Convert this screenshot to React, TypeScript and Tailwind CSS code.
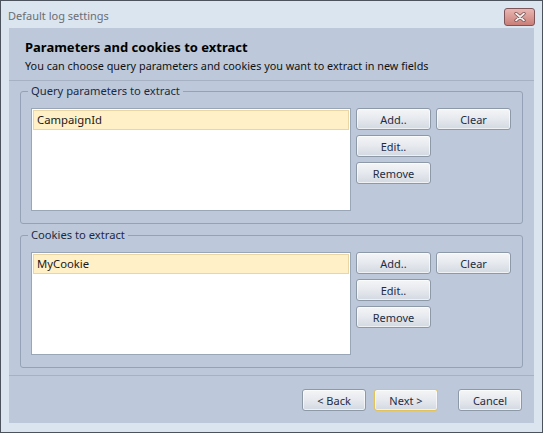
const font = "font-['Segoe_UI','Noto_Sans','Open_Sans',sans-serif]";

const Btn = ({ label, w = "w-[75px]", def = false }: { label: string; w?: string; def?: boolean }) => (
  <button
    className={`block ${w} h-[22px] rounded-[3px] border ${def ? "border-[#e3c25a]" : "border-[#8e99a8]"} bg-gradient-to-b from-[#f4f5f7] via-[#e6e9ee] to-[#d3d9e2] text-[11px] text-[#1e2d44] leading-none shadow-[inset_0_0_0_1px_rgba(255,255,255,0.6)]`}
  >
    {label}
  </button>
);

const Group = ({ title, item }: { title: string; item: string }) => (
  <div className="relative mx-[11px] rounded-[3px] border border-[#95a2b5] pt-[16px] pb-[12px] pl-[10px] pr-[11px]">
    <span className="absolute left-[7px] top-[-9px] bg-[#bdc9da] px-[3px] text-[11.2px] leading-[16px] text-[#1b2a44]">
      {title}
    </span>
    <div className="flex gap-[5px]">
      <div className="h-[103px] w-[322px] border border-[#98a6b8] bg-white p-[1px]">
        <div className="h-[20px] border border-[#e9d6a4] bg-[#fff0c8] pl-[3px] text-[11.3px] leading-[18px] text-[#1a1a1a]">
          {item}
        </div>
      </div>
      <div className="flex items-start gap-[5px]">
        <div className="flex flex-col gap-[5px]">
          <Btn label="Add.." />
          <Btn label="Edit.." />
          <Btn label="Remove" />
        </div>
        <Btn label="Clear" />
      </div>
    </div>
  </div>
);

export default function App() {
  return (
    <div className={`${font} flex h-[433px] w-[543px] flex-col border border-[#4d535c] bg-[#dae5f0]`}>
      <div className="flex h-[27px] shrink-0 items-center justify-between pl-[7px] pr-[7px]">
        <span className="mt-[4px] text-[11px] text-[#6b6e73]">Default log settings</span>
        <div className="mt-[4px] flex h-[18px] w-[31px] items-center justify-center rounded-[3px] border border-[#7d5558] bg-gradient-to-b from-[#e9b7b2] to-[#c97f78]">
          <svg width="12" height="10" viewBox="0 0 12 10">
            <path d="M2 1.5 L10 8.5 M10 1.5 L2 8.5" stroke="#6e4a4c" strokeWidth="3.2" strokeLinecap="round" />
            <path d="M2 1.5 L10 8.5 M10 1.5 L2 8.5" stroke="#f4eeee" strokeWidth="1.8" strokeLinecap="round" />
          </svg>
        </div>
      </div>
      <div className="mx-[8px] mb-[9px] flex flex-1 flex-col bg-[#bdc9da]">
        <div className="h-[53px] shrink-0 border-b border-[#a6b2c3] pl-[16px] pt-[10px]">
          <div className="text-[13px] font-bold leading-[19px] text-black">Parameters and cookies to extract</div>
          <div className="text-[10.85px] leading-[17px] text-[#111]">
            You can choose query parameters and cookies you want to extract in new fields
          </div>
        </div>
        <div className="flex flex-col gap-[11px] pt-[10px]">
          <Group title="Query parameters to extract" item="CampaignId" />
          <Group title="Cookies to extract" item="MyCookie" />
        </div>
        <div className="mt-[7px] border-t border-[#a6b2c3]" />
        <div className="flex flex-1 items-start justify-end pr-[12px] pt-[13px]">
          <div className="flex gap-[8px]">
            <Btn label="< Back" w="w-[64px]" />
            <Btn label="Next >" w="w-[64px]" def />
          </div>
          <div className="ml-[20px]">
            <Btn label="Cancel" w="w-[64px]" />
          </div>
        </div>
      </div>
    </div>
  );
}
